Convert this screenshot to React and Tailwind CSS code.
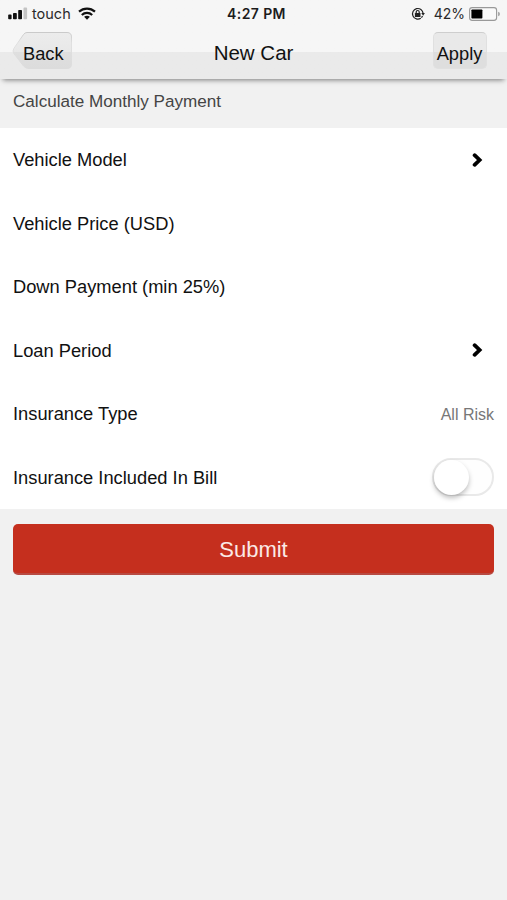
import { useState } from 'react';

const rows = [
  { label: 'Vehicle Model', arrow: true },
  { label: 'Vehicle Price (USD)' },
  { label: 'Down Payment (min 25%)' },
  { label: 'Loan Period', arrow: true },
  { label: 'Insurance Type', value: 'All Risk' },
  { label: 'Insurance Included In Bill', toggle: true },
];

function StatusBar() {
  return (
    <div className="grid h-[27px] grid-cols-3 items-center pl-2 pr-[6px] font-['Inter',sans-serif] text-[#2a2a2a]">
      <div className="flex items-center">
        <svg width="20" height="13" viewBox="0 0 20 13">
          <rect x="0.2" y="7.6" width="3.4" height="4.7" rx="0.8" fill="#111" />
          <rect x="5" y="6" width="3.8" height="6.3" rx="0.8" fill="#111" />
          <rect x="10.2" y="3" width="3.8" height="9.3" rx="0.8" fill="#111" />
          <rect x="15.5" y="0.6" width="3.6" height="11.7" rx="0.8" fill="#c4c4c4" />
        </svg>
        <span className="ml-1 mt-px text-[14.5px] leading-none">touch</span>
        <svg className="ml-[7px]" width="18" height="13" viewBox="0 0 18 13" fill="none" stroke="#111" strokeWidth="2.2">
          <path d="M1 4.6C5.6 0.5 12.4 0.5 17 4.6" />
          <path d="M3.8 8C6.8 5.2 11.2 5.2 14.2 8" />
          <path d="M6.1 9.8C7.7 8.4 10.3 8.4 11.9 9.8L9 12.8Z" fill="#111" stroke="none" />
        </svg>
      </div>
      <div className="pl-1 text-center text-[14px] leading-none font-semibold tracking-[0.4px] text-[#1c1c1c]">4:27 PM</div>
      <div className="flex items-center justify-end">
        <svg width="14" height="14" viewBox="0 0 14 14" fill="none" stroke="#222" strokeWidth="1.2">
          <path d="M9.8 11.2A5.3 5.3 0 1 1 12.1 6.4" />
          <path d="M10.3 6H13.9L12.1 8.8Z" fill="#222" stroke="none" />
          <path d="M11.6 9.2L10.4 10.7" />
          <rect x="3.9" y="6" width="5.6" height="4" rx="0.5" fill="#222" stroke="none" />
          <path d="M5.2 6.4V5A1.5 1.5 0 0 1 8.2 5V6.4" />
        </svg>
        <span className="ml-[9px] text-[14px] leading-none">42%</span>
        <svg className="ml-1" width="32" height="14" viewBox="0 0 32 14">
          <rect x="0.6" y="0.6" width="27" height="12.8" rx="2.6" fill="#fafafa" stroke="#999" strokeWidth="1.1" />
          <rect x="2.4" y="2.4" width="11" height="9.2" rx="0.8" fill="#000" />
          <path d="M29 4.8Q31 5.3 31 7T29 9.2Z" fill="#aaa" />
        </svg>
      </div>
    </div>
  );
}

function NavBar() {
  return (
    <div className="flex h-[52px] items-start justify-between pl-3 pr-5 text-[18.3px] text-[#111]">
      <button type="button" className="relative mt-[5px] flex h-[37px] w-[60px] items-center pl-[11px] pt-[7px]">
        <svg className="absolute inset-0" width="60" height="37" viewBox="0 0 60 37">
          <defs>
            <linearGradient id="back" x1="0" y1="0" x2="0" y2="1">
              <stop offset="0" stopColor="#ececec" />
              <stop offset="0.53" stopColor="#e8e8e8" />
              <stop offset="0.54" stopColor="#dfdfdf" />
              <stop offset="1" stopColor="#dcdcdc" />
            </linearGradient>
            <linearGradient id="backEdge" x1="0" y1="0" x2="0" y2="1">
              <stop offset="0" stopColor="#cacaca" />
              <stop offset="0.3" stopColor="#e0e0e0" />
              <stop offset="1" stopColor="#dcdcdc" />
            </linearGradient>
          </defs>
          <path
            d="M15 0.5H55Q59.5 0.5 59.5 5V32Q59.5 36.5 55 36.5H17Q13.5 36.5 11.5 34L1.8 21.5Q0.3 19 1.8 16.5L11.5 2.5Q13 0.5 15 0.5Z"
            fill="url(#back)"
            stroke="url(#backEdge)"
          />
        </svg>
        <span className="relative leading-none">Back</span>
      </button>
      <h1 className="mt-4 mr-[-2px] text-[20.5px] leading-none">New Car</h1>
      <button
        type="button"
        className="mt-[5px] flex h-[37px] w-[54px] items-center justify-center rounded-[5px] border border-[#e0e0e0] border-t-[#cecece] bg-linear-to-b from-[#e9e9e9] from-53% to-[#dedede] to-54% pt-[7px] pr-px leading-none"
      >
        Apply
      </button>
    </div>
  );
}

function Toggle() {
  const [on, setOn] = useState(false);

  return (
    <button
      type="button"
      onClick={() => setOn(!on)}
      className={`flex h-[38px] w-[62px] items-center rounded-full border-2 border-[#e9e9e9] ${on ? 'justify-end bg-green-500' : 'bg-[#fefefe]'}`}
    >
      <span className="h-[35px] w-[35px] rounded-full bg-white shadow-[0_3px_5px_rgba(0,0,0,0.25)]" />
    </button>
  );
}

export default function App() {
  return (
    <div className="flex h-[900px] w-[507px] flex-col overflow-hidden bg-[#f1f1f1] font-['Liberation_Sans',Arial,sans-serif]">
      <header className="relative h-[79px] bg-linear-to-b from-[#f6f6f6] from-[52px] to-[#eaeaea] to-[52px] shadow-[0_4px_5px_-3px_rgba(0,0,0,0.5)]">
        <StatusBar />
        <NavBar />
      </header>

      <div className="flex h-[49px] items-center px-[13px] pb-[4px] text-[17.1px] text-[#444]">
        Calculate Monthly Payment
      </div>

      <div className="bg-white">
        {rows.map(row => (
          <div key={row.label} className="flex h-[63.5px] items-center justify-between px-[13px] text-[18.3px] text-[#111]">
            <span>{row.label}</span>
            {row.arrow && (
              <svg className="mr-[11px]" width="11" height="14" viewBox="0 0 11 14" fill="none" stroke="#000" strokeWidth="3.8" strokeLinecap="round">
                <path d="M2.6 2.2L7.6 7L2.6 11.8" strokeLinejoin="miter" />
              </svg>
            )}
            {row.value && <span className="pt-0.5 text-[16px] text-[#777]">{row.value}</span>}
            {row.toggle && <Toggle />}
          </div>
        ))}
      </div>

      <div className="px-[13px] pt-[15px]">
        <button
          type="button"
          className="h-[51px] w-full rounded-[5px] border-b-2 border-[#b84a42] bg-[#c52f1e] pt-[2px] text-[22px] text-[#fbe9e6]"
        >
          Submit
        </button>
      </div>
    </div>
  );
}
